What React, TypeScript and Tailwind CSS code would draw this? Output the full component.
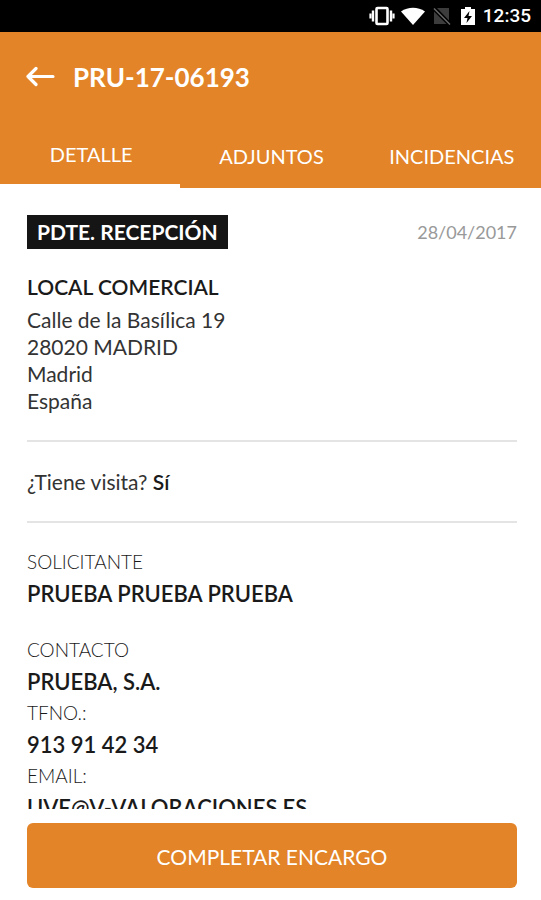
import { useState } from "react";

const TABS = ["DETALLE", "ADJUNTOS", "INCIDENCIAS"];

const ADDRESS = ["Calle de la Basílica 19", "28020 MADRID", "Madrid", "España"];

const CONTACT = [
  { label: "CONTACTO", value: "PRUEBA, S.A." },
  { label: "TFNO.:", value: "913 91 42 34" },
  { label: "EMAIL:", value: "UVE@V-VALORACIONES.ES" },
];

function StatusBar() {
  return (
    <div className="flex h-8 shrink-0 items-center justify-end bg-black pr-2.5 text-white">
      <svg width="26" height="20" viewBox="0 0 26 20" aria-hidden="true">
        <rect x="7.500" y="2" width="11" height="16" rx="1" fill="none" stroke="currentColor" strokeWidth="2.6" />
        <path d="M4 4.500v11M22 4.500v11" stroke="currentColor" strokeWidth="2.4" />
        <path d="M1.500 7.500v5M24.500 7.500v5" stroke="currentColor" strokeWidth="2.2" />
      </svg>
      <svg width="24" height="20" viewBox="0 0 24 20" className="ml-1.5" aria-hidden="true">
        <path d="M0 5.5C7 .5 17 .5 24 5.5L12 19z" fill="currentColor" />
      </svg>
      <svg width="18" height="20" viewBox="0 0 18 20" className="ml-2" aria-hidden="true">
        <path d="M4 2h12v12.500zM1 5.500L13.500 18H1z" fill="#3c3c3c" />
        <path d="M1 2.500l16 16" stroke="#6a6a6a" strokeWidth="1.500" />
      </svg>
      <svg width="14" height="20" viewBox="0 0 14 20" className="ml-2.5" aria-hidden="true">
        <path d="M4 1h6v2h4v16H0V3h4z" fill="currentColor" />
        <path d="M8.500 5L3 12h3.500L5.500 17 11 10H7.500z" fill="#000" />
      </svg>
      <span className="ml-2 font-[Roboto,sans-serif] text-[19px] font-medium">12:35</span>
    </div>
  );
}

function Field({ label, value }: { label: string; value: string }) {
  return (
    <div>
      <dt className="text-[19px] leading-8 font-light">{label}</dt>
      <dd className="text-[22px] leading-[31px] font-semibold">{value}</dd>
    </div>
  );
}

export default function App() {
  const [tab, setTab] = useState(TABS[0]);

  return (
    <div className="flex h-screen flex-col bg-white font-[Lato,sans-serif] text-[#1a1a1a]">
      <StatusBar />

      <header className="shrink-0 bg-[#e28427] text-white">
        <div className="flex h-[90px] items-center gap-[18px] px-[26px]">
          <button type="button" aria-label="Volver">
            <svg
              width="29"
              height="22"
              viewBox="0 0 29 22"
              fill="none"
              stroke="currentColor"
              strokeWidth="3.2"
              strokeLinecap="round"
              strokeLinejoin="round"
            >
              <path d="M27 10.500H2M10 2.500L2 10.500l8 8" />
            </svg>
          </button>
          <h1 className="text-[26px] font-bold">PRU-17-06193</h1>
        </div>

        <nav className="grid h-[66px] grid-cols-3">
          {TABS.map((name) => (
            <button
              key={name}
              type="button"
              onClick={() => setTab(name)}
              className={`pt-0.5 pl-0.5 text-xl ${tab === name ? "border-b-4 border-white" : ""}`}
            >
              {name}
            </button>
          ))}
        </nav>
      </header>

      <main className="min-h-0 flex-1 overflow-y-auto pt-[27px] pr-6 pl-[27px] [scrollbar-width:none]">
        <div className="flex items-center justify-between">
          <span className="bg-[#151515] px-2.5 text-[21px] leading-[34px] font-bold text-white">
            PDTE. RECEPCIÓN
          </span>
          <time className="text-lg text-[#999]">28/04/2017</time>
        </div>

        <section className="border-b-2 border-[#e4e4e4] pt-[23px] pb-[26px]">
          <h2 className="text-[21px] leading-[30px] font-semibold">LOCAL COMERCIAL</h2>
          <address className="pt-1 text-[21px] leading-[27px] text-[#333] not-italic">
            {ADDRESS.map((line) => (
              <div key={line}>{line}</div>
            ))}
          </address>
        </section>

        <p className="border-b-2 border-[#e4e4e4] py-[26px] text-[21px] leading-[27px] text-[#333]">
          ¿Tiene visita? <b className="font-semibold text-[#1a1a1a]">Sí</b>
        </p>

        <dl className="pt-[23px]">
          <Field label="SOLICITANTE" value="PRUEBA PRUEBA PRUEBA" />
        </dl>
        <dl className="pt-[25px]">
          {CONTACT.map((item) => (
            <Field key={item.label} label={item.label} value={item.value} />
          ))}
        </dl>
      </main>

      <footer className="shrink-0 pt-3.5 pr-6 pb-3 pl-[27px]">
        <button type="button" className="h-[65px] w-full rounded-md bg-[#e28427] pt-0.5 text-[21px] text-white">
          COMPLETAR ENCARGO
        </button>
      </footer>
    </div>
  );
}
